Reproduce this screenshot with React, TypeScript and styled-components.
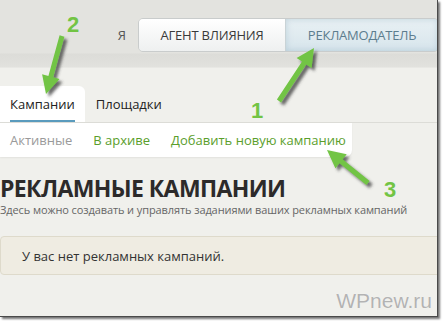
import React from 'react';
import styled, { createGlobalStyle } from 'styled-components';

const GlobalStyle = createGlobalStyle`
  html, body {
    margin: 0;
    padding: 0;
    background: #ffffff;
  }
  body {
    font-family: 'Open Sans', 'Liberation Sans', sans-serif;
    width: 443px;
    height: 321px;
    overflow: hidden;
  }
`;

type Pt = [number, number];

// builds a thick arrow polygon from tail to tip
function arrowPoints(tail: Pt, tip: Pt, shaft = 5, headW = 18, headL = 18) {
  const dx = tip[0] - tail[0];
  const dy = tip[1] - tail[1];
  const len = Math.hypot(dx, dy);
  const ux = dx / len;
  const uy = dy / len;
  const nx = -uy;
  const ny = ux;
  const bx = tip[0] - ux * headL;
  const by = tip[1] - uy * headL;
  const pts: Pt[] = [
    [tail[0] + (nx * shaft) / 2, tail[1] + (ny * shaft) / 2],
    [bx + (nx * shaft) / 2, by + (ny * shaft) / 2],
    [bx + (nx * headW) / 2, by + (ny * headW) / 2],
    tip,
    [bx - (nx * headW) / 2, by - (ny * headW) / 2],
    [bx - (nx * shaft) / 2, by - (ny * shaft) / 2],
    [tail[0] - (nx * shaft) / 2, tail[1] - (ny * shaft) / 2],
  ];
  return pts.map((p) => p.map((v) => v.toFixed(1)).join(',')).join(' ');
}

const arrows: { tail: Pt; tip: Pt }[] = [
  { tail: [62, 36], tip: [46, 94] },
  { tail: [279, 101], tip: [314, 48] },
  { tail: [368, 183], tip: [327, 150] },
];

const marks = [
  { n: '2', x: 67, y: 32 },
  { n: '1', x: 251, y: 118 },
  { n: '3', x: 384, y: 197 },
];

function App() {
  return (
    <>
      <GlobalStyle />
      <Frame>
        <TopBar>
          <RoleLabel>Я</RoleLabel>
          <RoleSwitch>
            <RoleBtn>АГЕНТ ВЛИЯНИЯ</RoleBtn>
            <RoleBtn active>РЕКЛАМОДАТЕЛЬ</RoleBtn>
          </RoleSwitch>
        </TopBar>
        <Tabs>
          <Tab active>
            <span>Кампании</span>
          </Tab>
          <Tab>
            <span>Площадки</span>
          </Tab>
        </Tabs>
        <SubNav>
          <SubLink muted>Активные</SubLink>
          <SubLink>В архиве</SubLink>
          <SubLink>Добавить новую кампанию</SubLink>
        </SubNav>
        <Title>РЕКЛАМНЫЕ КАМПАНИИ</Title>
        <Subtitle>Здесь можно создавать и управлять заданиями ваших рекламных кампаний</Subtitle>
        <Notice>У вас нет рекламных кампаний.</Notice>
        <Watermark>WPnew.ru</Watermark>

        <Overlay width="443" height="321" viewBox="0 0 443 321">
          <defs>
            <filter id="sh" x="-30%" y="-30%" width="160%" height="160%">
              <feDropShadow dx="3" dy="3" stdDeviation="1.6" floodColor="#3a3a3a" floodOpacity="0.75" />
            </filter>
          </defs>
          {arrows.map((a, i) => (
            <polygon key={i} points={arrowPoints(a.tail, a.tip)} fill="#72c444" filter="url(#sh)" />
          ))}
          {marks.map((m) => (
            <MarkText key={m.n} x={m.x} y={m.y}>
              {m.n}
            </MarkText>
          ))}
        </Overlay>
      </Frame>
    </>
  );
}

export default App;

const Frame = styled.div`
  position: relative;
  width: 437px;
  height: 316px;
  overflow: hidden;
  background: #f0f0ec;
  border-right: 1px solid #4a4a4a;
  border-bottom: 1px solid #4a4a4a;
  box-shadow: 2px 2px 2px rgba(0, 0, 0, 0.55);
  display: flex;
  flex-direction: column;
`;

const TopBar = styled.div`
  height: 68px;
  box-sizing: border-box;
  padding-top: 18px;
  display: flex;
  align-items: flex-start;
  justify-content: flex-end;
  background: linear-gradient(#e3e3df 0, #e3e3df 53px, #dcdcd8 54px, #e2e2de 68px);
  border-bottom: 1px solid #e8e8e4;
  margin-right: -2px;
`;

const RoleLabel = styled.span`
  font-size: 13px;
  color: #555;
  line-height: 34px;
  margin-right: 12px;
`;

const RoleSwitch = styled.div`
  display: flex;
  height: 34px;
  border: 1px solid #c9cccc;
  border-radius: 5px;
  overflow: hidden;
  box-sizing: border-box;
`;

const RoleBtn = styled.div<{ active?: boolean }>`
  display: flex;
  align-items: center;
  justify-content: center;
  font-size: 13px;
  letter-spacing: -0.2px;
  white-space: nowrap;
  width: ${(p) => (p.active ? '152px' : '146px')};
  color: ${(p) => (p.active ? '#5c7d8e' : '#3a3a3a')};
  background: ${(p) =>
    p.active ? 'linear-gradient(#e9f1f4, #d7e5ec)' : 'linear-gradient(#ffffff, #eef0f0)'};
  border-left: ${(p) => (p.active ? '1px solid #c9d3d6' : 'none')};
  box-shadow: ${(p) => (p.active ? 'inset 0 0 6px rgba(150, 180, 195, 0.5)' : 'none')};
`;

const Tabs = styled.div`
  display: flex;
  align-items: flex-end;
  height: 55px;
  border-bottom: 1px solid #dcdcd7;
  box-sizing: border-box;
`;

const Tab = styled.div<{ active?: boolean }>`
  height: 36px;
  box-sizing: border-box;
  padding: 0 10px;
  margin-right: 1px;
  display: flex;
  align-items: center;
  font-size: 13px;
  color: #222;
  white-space: nowrap;
  background: ${(p) => (p.active ? '#ffffff' : 'transparent')};
  border-radius: 0 6px 0 0;

  > span {
    height: 36px;
    display: flex;
    align-items: center;
    box-sizing: border-box;
    border-bottom: 2px solid ${(p) => (p.active ? '#5a9bbd' : 'transparent')};
    padding-top: 2px;
  }
`;

const SubNav = styled.div`
  width: 352px;
  height: 34px;
  box-sizing: border-box;
  padding: 0 10px;
  display: flex;
  align-items: center;
  gap: 21px;
  background: #ffffff;
  border-radius: 0 0 7px 0;
  box-shadow: 0 1px 2px rgba(0, 0, 0, 0.06);
`;

const SubLink = styled.span<{ muted?: boolean }>`
  font-size: 13px;
  white-space: nowrap;
  color: ${(p) => (p.muted ? '#9a9a9a' : '#5a9e2c')};
`;

const Title = styled.h1`
  margin: 19px 0 0;
  font-size: 23px;
  line-height: 24px;
  font-weight: 700;
  color: #2c2a2a;
  letter-spacing: -0.6px;
  white-space: nowrap;
`;

const Subtitle = styled.div`
  margin-top: 3px;
  font-size: 11px;
  color: #666;
  line-height: 14px;
  letter-spacing: -0.1px;
  white-space: nowrap;
`;

const Notice = styled.div`
  margin-top: 19px;
  margin-right: -4px;
  height: 39px;
  box-sizing: border-box;
  padding: 0 21px;
  display: flex;
  align-items: center;
  font-size: 13px;
  color: #333;
  background: #efece2;
  border: 1px solid #dedacb;
  border-radius: 4px;
`;

const Watermark = styled.div`
  margin-top: auto;
  align-self: flex-end;
  margin-right: 5px;
  margin-bottom: 3px;
  font-family: 'Liberation Sans', Arial, sans-serif;
  font-size: 21px;
  color: #b3b3b3;
  text-shadow: 0 0 1px rgba(255, 255, 255, 0.9);
`;

const Overlay = styled.svg`
  position: absolute;
  left: 0;
  top: 0;
  pointer-events: none;
`;

const MarkText = styled.text`
  font-family: 'Liberation Sans', Arial, sans-serif;
  font-weight: 700;
  font-size: 22px;
  fill: #72c444;
`;
